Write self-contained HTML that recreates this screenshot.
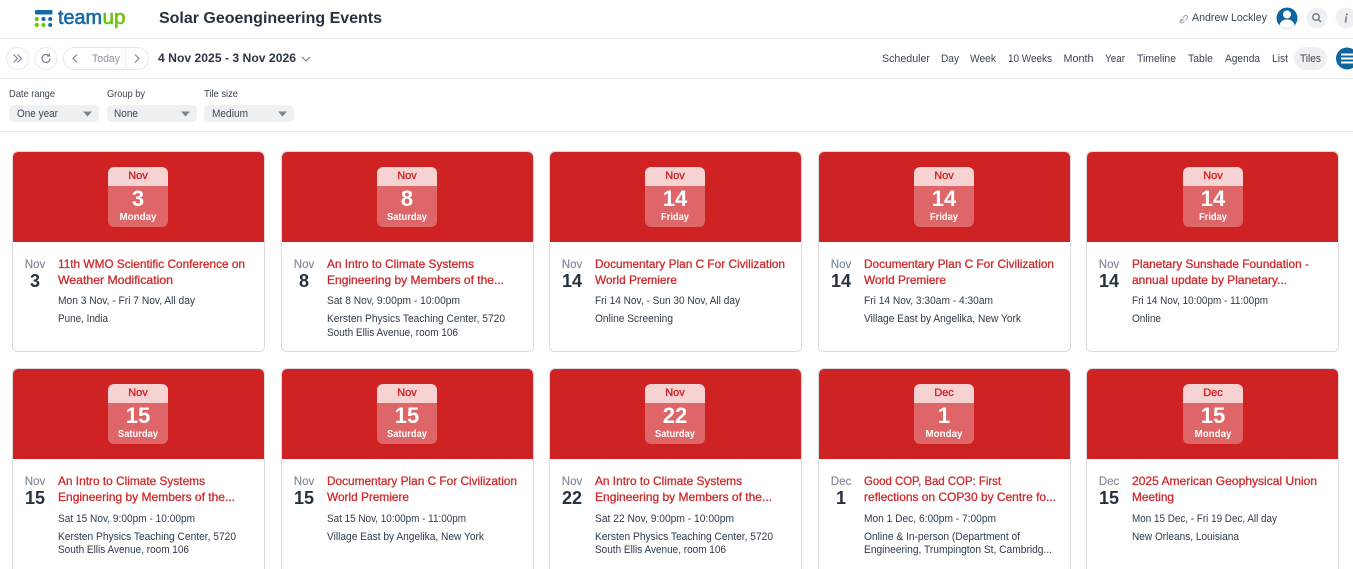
<!DOCTYPE html>
<html><head><meta charset="utf-8"><title>Solar Geoengineering Events</title>
<style>
html,body{margin:0;padding:0;background:#fff;width:1353px;height:569px;overflow:hidden}
svg{display:block;font-family:"Liberation Sans",sans-serif}
text{white-space:pre}
.t{font-size:12px;fill:#cf2a2c;stroke:#cf2a2c;stroke-width:.3}
.d{font-size:11px;fill:#2f3b48}
.m{font-size:11.5px;fill:#808a97;text-anchor:middle;stroke:#808a97;stroke-width:.15}
.n{font-size:18px;font-weight:bold;fill:#26323f;text-anchor:middle}
.bm{font-size:11px;fill:#cf2323;text-anchor:middle;stroke:#cf2323;stroke-width:.35}
.bn{font-size:22px;font-weight:bold;fill:#fff;text-anchor:middle}
.bw{font-size:10.5px;font-weight:bold;fill:#fff;text-anchor:middle}
.l{font-size:10.2px;fill:#3a4654}
.s{font-size:11px;fill:#3a4654}
.c{fill:#fff;stroke:#d9dbde}
.h{fill:#cf2323}
.b1{fill:#f6d2d3}
.b2{fill:#df6668}
</style></head><body>
<svg width="1353" height="569" viewBox="0 0 1353 569" xmlns="http://www.w3.org/2000/svg">
<rect x="35" y="10" width="17.500" height="4.500" rx="1" fill="#1669a8"/>
<circle cx="36.800" cy="19" r="2" fill="#6cc20c"/><circle cx="43.500" cy="19" r="2" fill="#1669a8"/><circle cx="50.200" cy="19" r="2" fill="#1669a8"/>
<circle cx="36.800" cy="25" r="2" fill="#6cc20c"/><circle cx="43.500" cy="25" r="2" fill="#6cc20c"/><circle cx="50.200" cy="25" r="2" fill="#1669a8"/>
<text x="58" y="24" font-size="20" fill="#1669a8" stroke="#1669a8" stroke-width=".6" textLength="44" lengthAdjust="spacingAndGlyphs">team</text>
<text x="102.500" y="24" font-size="20" fill="#6cc20c" stroke="#6cc20c" stroke-width=".6" textLength="23" lengthAdjust="spacingAndGlyphs">up</text>
<text x="159" y="23" font-size="16" font-weight="bold" fill="#26323f" textLength="223" lengthAdjust="spacingAndGlyphs">Solar Geoengineering Events</text>

<path d="M1181 21.500l2.500-2.500M1183 17.500l1.500-1.500a1.600 1.600 0 0 1 2.500 2.500l-1.500 1.500M1184.500 21l-1.500 1.500a1.600 1.600 0 0 1-2.500-2.500l1.500-1.500" fill="none" stroke="#9aa1aa" stroke-width="1"/>
<text x="1192" y="21" class="s" textLength="75" lengthAdjust="spacingAndGlyphs">Andrew Lockley</text>
<circle cx="1287" cy="18" r="10.500" fill="#0f659f"/>
<circle cx="1287" cy="14.500" r="4" fill="#fff"/>
<path d="M1279.500 25c1-4 4-5.500 7.500-5.500s6.500 1.500 7.500 5.500a10 10 0 0 1-15 0z" fill="#fff"/>
<circle cx="1317" cy="18" r="10.500" fill="#eff0f2"/>
<circle cx="1316" cy="17" r="3.200" fill="none" stroke="#7b8490" stroke-width="1.600"/>
<path d="M1318.500 19.500l2.500 2.500" stroke="#7b8490" stroke-width="1.800"/>
<circle cx="1346" cy="18" r="10.500" fill="#eff0f2"/>
<text x="1346" y="22.500" font-family="Liberation Serif" font-style="italic" font-weight="bold" font-size="13" fill="#7b8490" text-anchor="middle">i</text>

<rect x="0" y="38" width="1353" height="1" fill="#e6e7ee"/>
<rect x="0" y="78" width="1353" height="1" fill="#e4e5e8"/>
<rect x="0" y="131" width="1353" height="1" fill="#e4e5e8"/>

<circle cx="17.500" cy="58.500" r="11" fill="#fff" stroke="#e6e8ee"/>
<path d="M13.500 54.500l4 4-4 4M17.500 54.500l4 4-4 4" fill="none" stroke="#7b8490" stroke-width="1.200"/>
<circle cx="46" cy="58.500" r="11" fill="#fff" stroke="#e6e8ee"/>
<path d="M50 58.500a4 4 0 1 1-1.300-3M49.500 53.500v2.500h-2.500" fill="none" stroke="#7b8490" stroke-width="1.200"/>
<rect x="63.500" y="47.500" width="85" height="22" rx="11" fill="#fff" stroke="#e6e8ee"/>
<path d="M125.500 48v21" stroke="#f0f1f4"/>
<path d="M77 54.500l-4 4 4 4" fill="none" stroke="#7b8490" stroke-width="1.200"/>
<path d="M135 54.500l4 4-4 4" fill="none" stroke="#7b8490" stroke-width="1.200"/>
<text x="92" y="62" font-size="11" fill="#8a94a3" textLength="28" lengthAdjust="spacingAndGlyphs">Today</text>
<text x="158" y="62" font-size="12" font-weight="bold" fill="#2b3744" textLength="138" lengthAdjust="spacingAndGlyphs">4 Nov 2025 - 3 Nov 2026</text>
<path d="M302 57l4 4 4-4" fill="none" stroke="#6f7884" stroke-width="1.100"/>

<text x="882" y="62" class="s" textLength="48" lengthAdjust="spacingAndGlyphs">Scheduler</text>
<text x="941" y="62" class="s" textLength="18" lengthAdjust="spacingAndGlyphs">Day</text>
<text x="970" y="62" class="s" textLength="26" lengthAdjust="spacingAndGlyphs">Week</text>
<text x="1008" y="62" class="s" textLength="44" lengthAdjust="spacingAndGlyphs">10 Weeks</text>
<text x="1063.500" y="62" class="s" textLength="30" lengthAdjust="spacingAndGlyphs">Month</text>
<text x="1105" y="62" class="s" textLength="20" lengthAdjust="spacingAndGlyphs">Year</text>
<text x="1137" y="62" class="s" textLength="39" lengthAdjust="spacingAndGlyphs">Timeline</text>
<text x="1188" y="62" class="s" textLength="25" lengthAdjust="spacingAndGlyphs">Table</text>
<text x="1225" y="62" class="s" textLength="35" lengthAdjust="spacingAndGlyphs">Agenda</text>
<text x="1272" y="62" class="s" textLength="16" lengthAdjust="spacingAndGlyphs">List</text>
<rect x="1294" y="47" width="33" height="23" rx="11.500" fill="#eff0f2"/>
<text x="1300" y="62" class="s" textLength="21" lengthAdjust="spacingAndGlyphs">Tiles</text>
<circle cx="1347" cy="58.500" r="11" fill="#0f659f"/>
<path d="M1341 54.500h12M1341 58.500h12M1341 62.500h12" stroke="#fff" stroke-width="2"/>

<text x="9" y="97" class="l" textLength="46" lengthAdjust="spacingAndGlyphs">Date range</text>
<text x="107" y="97" class="l" textLength="38" lengthAdjust="spacingAndGlyphs">Group by</text>
<text x="204" y="97" class="l" textLength="34" lengthAdjust="spacingAndGlyphs">Tile size</text>
<rect x="9" y="105" width="90" height="17" rx="5" fill="#eff0f2"/>
<rect x="107" y="105" width="90" height="17" rx="5" fill="#eff0f2"/>
<rect x="204" y="105" width="90" height="17" rx="5" fill="#eff0f2"/>
<text x="17" y="117" class="s" textLength="41" lengthAdjust="spacingAndGlyphs">One year</text>
<text x="114" y="117" class="s" textLength="24" lengthAdjust="spacingAndGlyphs">None</text>
<text x="212" y="117" class="s" textLength="36" lengthAdjust="spacingAndGlyphs">Medium</text>
<path d="M83 111.500h9l-4.500 5zM181 111.500h9l-4.500 5zM278 111.500h9l-4.500 5z" fill="#7b8490"/>

<!-- Row 1 -->
<rect class="c" x="12.500" y="151.500" width="252" height="200" rx="5"/>
<path class="h" d="M13 157a5 5 0 0 1 5-5h241a5 5 0 0 1 5 5v85H13z"/>
<path class="b1" d="M108 186v-13a6 6 0 0 1 6-6h48a6 6 0 0 1 6 6v13z"/>
<path class="b2" d="M108 186h60v35a6 6 0 0 1-6 6h-48a6 6 0 0 1-6-6z"/>
<text class="bm" x="138" y="179">Nov</text><text class="bn" x="138" y="206">3</text><text class="bw" x="138" y="220" textLength="37" lengthAdjust="spacingAndGlyphs">Monday</text>
<text class="m" x="35" y="268">Nov</text><text class="n" x="35" y="287">3</text>
<text class="t" x="58" y="268" textLength="187" lengthAdjust="spacingAndGlyphs">11th WMO Scientific Conference on</text>
<text class="t" x="58" y="284" textLength="115" lengthAdjust="spacingAndGlyphs">Weather Modification</text>
<text class="d" x="58" y="304" textLength="137" lengthAdjust="spacingAndGlyphs">Mon 3 Nov, - Fri 7 Nov, All day</text>
<text class="d" x="58" y="322" textLength="50" lengthAdjust="spacingAndGlyphs">Pune, India</text>

<rect class="c" x="281.500" y="151.500" width="252" height="200" rx="5"/>
<path class="h" d="M282 157a5 5 0 0 1 5-5h241a5 5 0 0 1 5 5v85H282z"/>
<path class="b1" d="M377 186v-13a6 6 0 0 1 6-6h48a6 6 0 0 1 6 6v13z"/>
<path class="b2" d="M377 186h60v35a6 6 0 0 1-6 6h-48a6 6 0 0 1-6-6z"/>
<text class="bm" x="407" y="179">Nov</text><text class="bn" x="407" y="206">8</text><text class="bw" x="407" y="220" textLength="40" lengthAdjust="spacingAndGlyphs">Saturday</text>
<text class="m" x="304" y="268">Nov</text><text class="n" x="304" y="287">8</text>
<text class="t" x="327" y="268" textLength="147" lengthAdjust="spacingAndGlyphs">An Intro to Climate Systems</text>
<text class="t" x="327" y="284" textLength="177" lengthAdjust="spacingAndGlyphs">Engineering by Members of the...</text>
<text class="d" x="327" y="304" textLength="133" lengthAdjust="spacingAndGlyphs">Sat 8 Nov, 9:00pm - 10:00pm</text>
<text class="d" x="327" y="322" textLength="178" lengthAdjust="spacingAndGlyphs">Kersten Physics Teaching Center, 5720</text>
<text class="d" x="327" y="336" textLength="131" lengthAdjust="spacingAndGlyphs">South Ellis Avenue, room 106</text>

<rect class="c" x="549.500" y="151.500" width="252" height="200" rx="5"/>
<path class="h" d="M550 157a5 5 0 0 1 5-5h241a5 5 0 0 1 5 5v85H550z"/>
<path class="b1" d="M645 186v-13a6 6 0 0 1 6-6h48a6 6 0 0 1 6 6v13z"/>
<path class="b2" d="M645 186h60v35a6 6 0 0 1-6 6h-48a6 6 0 0 1-6-6z"/>
<text class="bm" x="675" y="179">Nov</text><text class="bn" x="675" y="206">14</text><text class="bw" x="675" y="220" textLength="28" lengthAdjust="spacingAndGlyphs">Friday</text>
<text class="m" x="572" y="268">Nov</text><text class="n" x="572" y="287">14</text>
<text class="t" x="595" y="268" textLength="190" lengthAdjust="spacingAndGlyphs">Documentary Plan C For Civilization</text>
<text class="t" x="595" y="284" textLength="82" lengthAdjust="spacingAndGlyphs">World Premiere</text>
<text class="d" x="595" y="304" textLength="145" lengthAdjust="spacingAndGlyphs">Fri 14 Nov, - Sun 30 Nov, All day</text>
<text class="d" x="595" y="322" textLength="78" lengthAdjust="spacingAndGlyphs">Online Screening</text>

<rect class="c" x="818.500" y="151.500" width="252" height="200" rx="5"/>
<path class="h" d="M819 157a5 5 0 0 1 5-5h241a5 5 0 0 1 5 5v85H819z"/>
<path class="b1" d="M914 186v-13a6 6 0 0 1 6-6h48a6 6 0 0 1 6 6v13z"/>
<path class="b2" d="M914 186h60v35a6 6 0 0 1-6 6h-48a6 6 0 0 1-6-6z"/>
<text class="bm" x="944" y="179">Nov</text><text class="bn" x="944" y="206">14</text><text class="bw" x="944" y="220" textLength="28" lengthAdjust="spacingAndGlyphs">Friday</text>
<text class="m" x="841" y="268">Nov</text><text class="n" x="841" y="287">14</text>
<text class="t" x="864" y="268" textLength="190" lengthAdjust="spacingAndGlyphs">Documentary Plan C For Civilization</text>
<text class="t" x="864" y="284" textLength="82" lengthAdjust="spacingAndGlyphs">World Premiere</text>
<text class="d" x="864" y="304" textLength="129" lengthAdjust="spacingAndGlyphs">Fri 14 Nov, 3:30am - 4:30am</text>
<text class="d" x="864" y="322" textLength="157" lengthAdjust="spacingAndGlyphs">Village East by Angelika, New York</text>

<rect class="c" x="1086.500" y="151.500" width="252" height="200" rx="5"/>
<path class="h" d="M1087 157a5 5 0 0 1 5-5h241a5 5 0 0 1 5 5v85H1087z"/>
<path class="b1" d="M1183 186v-13a6 6 0 0 1 6-6h48a6 6 0 0 1 6 6v13z"/>
<path class="b2" d="M1183 186h60v35a6 6 0 0 1-6 6h-48a6 6 0 0 1-6-6z"/>
<text class="bm" x="1213" y="179">Nov</text><text class="bn" x="1213" y="206">14</text><text class="bw" x="1213" y="220" textLength="28" lengthAdjust="spacingAndGlyphs">Friday</text>
<text class="m" x="1109" y="268">Nov</text><text class="n" x="1109" y="287">14</text>
<text class="t" x="1132" y="268" textLength="177" lengthAdjust="spacingAndGlyphs">Planetary Sunshade Foundation -</text>
<text class="t" x="1132" y="284" textLength="155" lengthAdjust="spacingAndGlyphs">annual update by Planetary...</text>
<text class="d" x="1132" y="304" textLength="136" lengthAdjust="spacingAndGlyphs">Fri 14 Nov, 10:00pm - 11:00pm</text>
<text class="d" x="1132" y="322" textLength="29" lengthAdjust="spacingAndGlyphs">Online</text>

<!-- Row 2 -->
<rect class="c" x="12.500" y="368.500" width="252" height="210" rx="5"/>
<path class="h" d="M13 374a5 5 0 0 1 5-5h241a5 5 0 0 1 5 5v85H13z"/>
<path class="b1" d="M108 403v-13a6 6 0 0 1 6-6h48a6 6 0 0 1 6 6v13z"/>
<path class="b2" d="M108 403h60v35a6 6 0 0 1-6 6h-48a6 6 0 0 1-6-6z"/>
<text class="bm" x="138" y="396">Nov</text><text class="bn" x="138" y="423">15</text><text class="bw" x="138" y="437" textLength="40" lengthAdjust="spacingAndGlyphs">Saturday</text>
<text class="m" x="35" y="485">Nov</text><text class="n" x="35" y="504">15</text>
<text class="t" x="58" y="485" textLength="147" lengthAdjust="spacingAndGlyphs">An Intro to Climate Systems</text>
<text class="t" x="58" y="501" textLength="177" lengthAdjust="spacingAndGlyphs">Engineering by Members of the...</text>
<text class="d" x="58" y="522" textLength="137" lengthAdjust="spacingAndGlyphs">Sat 15 Nov, 9:00pm - 10:00pm</text>
<text class="d" x="58" y="540" textLength="178" lengthAdjust="spacingAndGlyphs">Kersten Physics Teaching Center, 5720</text>
<text class="d" x="58" y="553" textLength="131" lengthAdjust="spacingAndGlyphs">South Ellis Avenue, room 106</text>

<rect class="c" x="281.500" y="368.500" width="252" height="210" rx="5"/>
<path class="h" d="M282 374a5 5 0 0 1 5-5h241a5 5 0 0 1 5 5v85H282z"/>
<path class="b1" d="M377 403v-13a6 6 0 0 1 6-6h48a6 6 0 0 1 6 6v13z"/>
<path class="b2" d="M377 403h60v35a6 6 0 0 1-6 6h-48a6 6 0 0 1-6-6z"/>
<text class="bm" x="407" y="396">Nov</text><text class="bn" x="407" y="423">15</text><text class="bw" x="407" y="437" textLength="40" lengthAdjust="spacingAndGlyphs">Saturday</text>
<text class="m" x="304" y="485">Nov</text><text class="n" x="304" y="504">15</text>
<text class="t" x="327" y="485" textLength="190" lengthAdjust="spacingAndGlyphs">Documentary Plan C For Civilization</text>
<text class="t" x="327" y="501" textLength="82" lengthAdjust="spacingAndGlyphs">World Premiere</text>
<text class="d" x="327" y="522" textLength="139" lengthAdjust="spacingAndGlyphs">Sat 15 Nov, 10:00pm - 11:00pm</text>
<text class="d" x="327" y="540" textLength="157" lengthAdjust="spacingAndGlyphs">Village East by Angelika, New York</text>

<rect class="c" x="549.500" y="368.500" width="252" height="210" rx="5"/>
<path class="h" d="M550 374a5 5 0 0 1 5-5h241a5 5 0 0 1 5 5v85H550z"/>
<path class="b1" d="M645 403v-13a6 6 0 0 1 6-6h48a6 6 0 0 1 6 6v13z"/>
<path class="b2" d="M645 403h60v35a6 6 0 0 1-6 6h-48a6 6 0 0 1-6-6z"/>
<text class="bm" x="675" y="396">Nov</text><text class="bn" x="675" y="423">22</text><text class="bw" x="675" y="437" textLength="40" lengthAdjust="spacingAndGlyphs">Saturday</text>
<text class="m" x="572" y="485">Nov</text><text class="n" x="572" y="504">22</text>
<text class="t" x="595" y="485" textLength="147" lengthAdjust="spacingAndGlyphs">An Intro to Climate Systems</text>
<text class="t" x="595" y="501" textLength="177" lengthAdjust="spacingAndGlyphs">Engineering by Members of the...</text>
<text class="d" x="595" y="522" textLength="139" lengthAdjust="spacingAndGlyphs">Sat 22 Nov, 9:00pm - 10:00pm</text>
<text class="d" x="595" y="540" textLength="178" lengthAdjust="spacingAndGlyphs">Kersten Physics Teaching Center, 5720</text>
<text class="d" x="595" y="553" textLength="131" lengthAdjust="spacingAndGlyphs">South Ellis Avenue, room 106</text>

<rect class="c" x="818.500" y="368.500" width="252" height="210" rx="5"/>
<path class="h" d="M819 374a5 5 0 0 1 5-5h241a5 5 0 0 1 5 5v85H819z"/>
<path class="b1" d="M914 403v-13a6 6 0 0 1 6-6h48a6 6 0 0 1 6 6v13z"/>
<path class="b2" d="M914 403h60v35a6 6 0 0 1-6 6h-48a6 6 0 0 1-6-6z"/>
<text class="bm" x="944" y="396">Dec</text><text class="bn" x="944" y="423">1</text><text class="bw" x="944" y="437" textLength="37" lengthAdjust="spacingAndGlyphs">Monday</text>
<text class="m" x="841" y="485">Dec</text><text class="n" x="841" y="504">1</text>
<text class="t" x="864" y="485" textLength="137" lengthAdjust="spacingAndGlyphs">Good COP, Bad COP: First</text>
<text class="t" x="864" y="501" textLength="192" lengthAdjust="spacingAndGlyphs">reflections on COP30 by Centre fo...</text>
<text class="d" x="864" y="522" textLength="132" lengthAdjust="spacingAndGlyphs">Mon 1 Dec, 6:00pm - 7:00pm</text>
<text class="d" x="864" y="540" textLength="156" lengthAdjust="spacingAndGlyphs">Online &amp; In-person (Department of</text>
<text class="d" x="864" y="553" textLength="188" lengthAdjust="spacingAndGlyphs">Engineering, Trumpington St, Cambridg...</text>

<rect class="c" x="1086.500" y="368.500" width="252" height="210" rx="5"/>
<path class="h" d="M1087 374a5 5 0 0 1 5-5h241a5 5 0 0 1 5 5v85H1087z"/>
<path class="b1" d="M1183 403v-13a6 6 0 0 1 6-6h48a6 6 0 0 1 6 6v13z"/>
<path class="b2" d="M1183 403h60v35a6 6 0 0 1-6 6h-48a6 6 0 0 1-6-6z"/>
<text class="bm" x="1213" y="396">Dec</text><text class="bn" x="1213" y="423">15</text><text class="bw" x="1213" y="437" textLength="37" lengthAdjust="spacingAndGlyphs">Monday</text>
<text class="m" x="1109" y="485">Dec</text><text class="n" x="1109" y="504">15</text>
<text class="t" x="1132" y="485" textLength="185" lengthAdjust="spacingAndGlyphs">2025 American Geophysical Union</text>
<text class="t" x="1132" y="501" textLength="42" lengthAdjust="spacingAndGlyphs">Meeting</text>
<text class="d" x="1132" y="522" textLength="145" lengthAdjust="spacingAndGlyphs">Mon 15 Dec, - Fri 19 Dec, All day</text>
<text class="d" x="1132" y="540" textLength="107" lengthAdjust="spacingAndGlyphs">New Orleans, Louisiana</text>
</svg>
</body></html>
